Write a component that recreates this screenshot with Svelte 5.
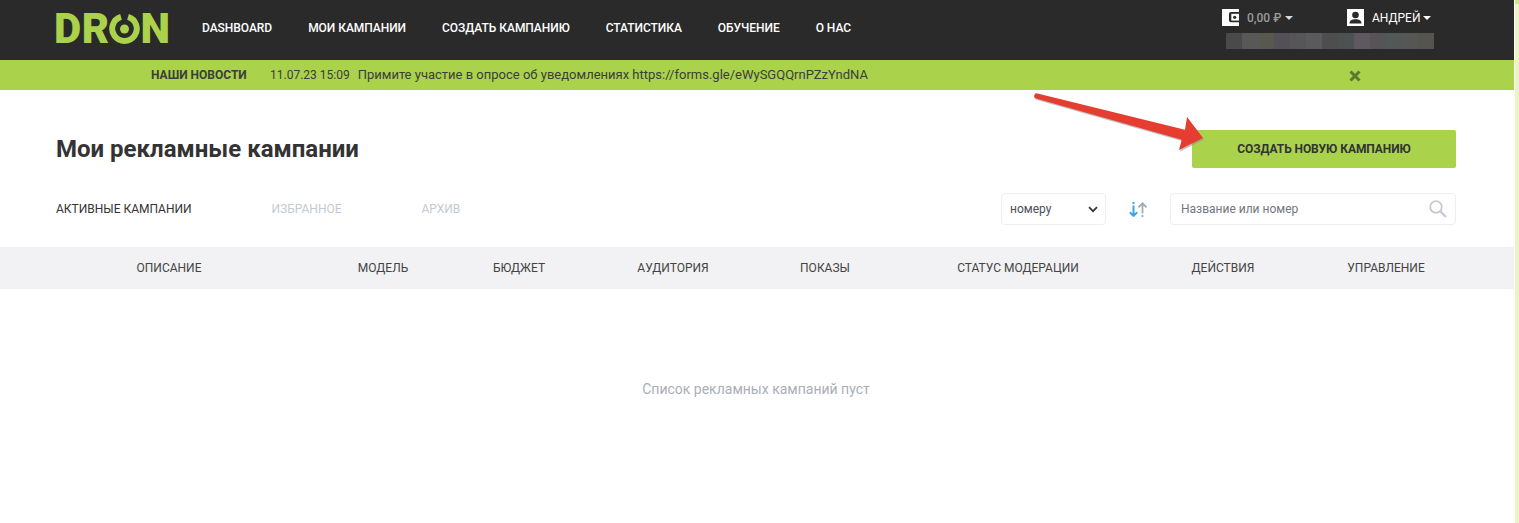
<script>
  const navItems = ['DASHBOARD', 'МОИ КАМПАНИИ', 'СОЗДАТЬ КАМПАНИЮ', 'СТАТИСТИКА', 'ОБУЧЕНИЕ', 'О НАС'];
  const blur = ['#4a4a4a','#585858','#58584f','#535058','#565658','#5a5a5c','#4e4e4e','#4c5252','#5e5860','#565456','#525856','#565654','#56544e'];
  const cols = [['ОПИСАНИЕ',258],['МОДЕЛЬ',170],['БЮДЖЕТ',102],['АУДИТОРИЯ',206],['ПОКАЗЫ',98],['СТАТУС МОДЕРАЦИИ',288],['ДЕЙСТВИЯ',122],['УПРАВЛЕНИЕ',204]];
</script>

<div class="page">
  <main class="main">
    <header class="top">
      <div class="logo" aria-label="DRON">
        <span>DR</span>
        <svg class="ring" width="31" height="32" viewBox="0 0 31 32">
          <path d="M12 3.900A12.300 12.300 0 1 0 19 3.900" fill="none" stroke="#aad24b" stroke-width="6"/>
          <circle cx="15.500" cy="16" r="4.500" fill="#aad24b"/>
        </svg>
        <span>N</span>
      </div>
      <nav class="nav">
        {#each navItems as item}<span>{item}</span>{/each}
      </nav>
      <div class="account">
        <div class="account-row">
          <div class="wallet">
            <svg width="17" height="17" viewBox="0 0 17 17">
              <rect width="17" height="17" fill="#fff"/>
              <path d="M17 3H9a2 2 0 0 0-2 2v6.300a2 2 0 0 0 2 2h8z" fill="#2a2a2a"/>
              <rect x="9.300" y="4.800" width="7.700" height="6.800" fill="#fff"/>
              <circle cx="12.700" cy="8.300" r="1.600" fill="#2a2a2a"/>
            </svg>
            <span class="balance">0,00 ₽</span><i class="caret"></i>
          </div>
          <div class="user">
            <svg width="17" height="17" viewBox="0 0 17 17">
              <rect width="17" height="17" fill="#fff"/>
              <circle cx="8.500" cy="6" r="3.300" fill="#2a2a2a"/>
              <path d="M2.500 14.500c0-3 2.500-4.300 6-4.300s6 1.300 6 4.300z" fill="#2a2a2a"/>
            </svg>
            <span class="uname">АНДРЕЙ</span><i class="caret light"></i>
          </div>
        </div>
        <div class="blur">
          {#each blur as c}<span style="background:{c}"></span>{/each}
        </div>
      </div>
    </header>

    <div class="news">
      <b>НАШИ НОВОСТИ</b>
      <span class="date">11.07.23 15:09</span>
      <span class="msg">Примите участие в опросе об уведомлениях https://forms.gle/eWySGQQrnPZzYndNA</span>
      <svg class="close" width="12" height="12" viewBox="0 0 12 12"><path d="M1.500 1.500l9 9M10.500 1.500l-9 9" stroke="#5f7631" stroke-width="3"/></svg>
    </div>

    <section class="title-row">
      <h1>Мои рекламные кампании</h1>
      <button class="create">СОЗДАТЬ НОВУЮ КАМПАНИЮ</button>
    </section>

    <section class="filters">
      <div class="tabs">
        <span class="tab active">АКТИВНЫЕ КАМПАНИИ</span>
        <span class="tab t2">ИЗБРАННОЕ</span>
        <span class="tab t3">АРХИВ</span>
      </div>
      <div class="select-wrap">
        <select><option>номеру</option></select>
        <svg class="chev" width="10" height="7" viewBox="0 0 10 7"><path d="M1 1.200l4 4 4-4" fill="none" stroke="#333" stroke-width="1.700"/></svg>
      </div>
      <svg class="sort" width="18" height="15" viewBox="0 0 18 15">
        <path d="M4.500 0v2M4.500 3.500V14M.8 10.200l3.700 3.700 3.700-3.700" fill="none" stroke="#3aa6e8" stroke-width="2"/>
        <path d="M13.500 15v-2M13.500 11.500V1.500M9.400 5.400l4.100-4.100 4.100 4.100" fill="none" stroke="#a3aab5" stroke-width="1.800"/>
      </svg>
      <div class="search">
        <input placeholder="Название или номер" />
        <svg class="loupe" width="18" height="18" viewBox="0 0 18 18"><circle cx="7" cy="7" r="5.800" fill="none" stroke="#c3c9d3" stroke-width="1.800"/><path d="M11.200 11.200L17 17" stroke="#c3c9d3" stroke-width="2.200"/></svg>
      </div>
    </section>

    <div class="thead">
      {#each cols as [label, w]}<span style="width:{w}px">{label}</span>{/each}
    </div>

    <p class="empty">Список рекламных кампаний пуст</p>

    <svg class="arrow" width="190" height="70" viewBox="0 0 190 70">
      <path d="M4 8.500L149.700 49.700 147 60 171 48 155 27 153 39.700 5.500 3.500a2.600 2.600 0 0 0-1.500 5z" transform="translate(1 1.500)" fill="#8c8c8c" opacity=".55"/>
      <path d="M4 8.500L149.700 49.700 147 60 171 48 155 27 153 39.700 5.500 3.500a2.600 2.600 0 0 0-1.500 5z" fill="#e53e30"/>
    </svg>
  </main>
  <aside class="scrollbar"><div class="thumb"></div></aside>
</div>

<style>
  :global(body) { margin: 0; background: #fff; overflow: hidden; }
  .page { display: flex; height: 523px; font-family: Roboto, "Liberation Sans", sans-serif; color: #333; font-size: 12px; }
  .main { flex: 1; position: relative; min-width: 0; }
  .scrollbar { width: 4px; margin-left: 1px; background: #eaf4c6; }
  .thumb { height: 4px; background: #cfe58a; }

  .top { height: 60px; background: #2a2a2a; display: flex; padding-left: 54px; box-sizing: border-box; position: relative; }
  .logo { width: 115px; height: 32px; margin-top: 13px; display: flex; align-items: center; color: #aad24b; font: 900 42px/32px Roboto, sans-serif; letter-spacing: 0.5px; }
  .ring { margin: 0 1px 0 -1px; flex: none; }
  .nav { display: flex; gap: 36px; margin-left: 33px; height: 56px; align-items: center; color: #fff; font-weight: 500; letter-spacing: -0.04px; }
  .account { margin-left: auto; margin-right: 80px; width: 208px; padding-top: 9px; }
  .account-row { display: flex; height: 17px; margin-left: -4px; }
  .wallet { display: flex; align-items: center; width: 125px; }
  .user { display: flex; align-items: center; }
  .balance { margin-left: 8px; color: #9a9a9a; font-weight: 500; }
  .uname { margin-left: 8px; color: #fff; }
  .caret { width: 0; height: 0; margin-left: 4px; border: 4px solid transparent; border-top: 4px solid #d8d8d8; border-bottom: 0; }
  .caret.light { margin-left: 2px; border-top-color: #fff; }
  .blur { display: flex; height: 16px; margin-top: 7px; }
  .blur span { flex: 1; }

  .news { height: 30px; background: #aad24b; display: flex; align-items: center; padding-left: 151px; color: #3d3d3d; position: relative; }
  .news b { font-weight: 700; width: 119px; }
  .msg { margin: 0 0 2px 8px; font-size: 13px; }
  .close { position: absolute; left: 1349px; top: 10px; }

  .title-row { display: flex; align-items: center; justify-content: space-between; padding: 40px 58px 0 56px; height: 38px; }
  h1 { margin: 0; font-size: 24px; line-height: 38px; font-weight: 700; color: #333; }
  .create { width: 264px; height: 38px; background: #aad24b; border: 0; border-radius: 2px; color: #333; font: 700 12px Roboto, sans-serif; letter-spacing: -0.08px; padding: 0; }

  .filters { display: flex; align-items: center; margin-top: 25px; padding: 0 58px 0 56px; height: 32px; }
  .tabs { flex: 1; display: flex; align-items: center; }
  .tab { color: #333; }
  .t2, .t3 { color: #c3c9d3; }
  .active { width: 215.500px; }
  .t2 { width: 150px; }
  .select-wrap { position: relative; width: 105px; height: 32px; }
  select { appearance: none; width: 100%; height: 100%; box-sizing: border-box; border: 1px solid #eceef1; border-radius: 4px; background: #fff; padding: 0 0 0 8px; font: 12px Roboto, sans-serif; color: #4a4f5a; }
  .chev { position: absolute; right: 8px; top: 13px; pointer-events: none; }
  .sort { margin: 0 23px; flex: none; }
  .search { position: relative; width: 286px; height: 32px; }
  input { width: 100%; height: 100%; box-sizing: border-box; border: 1px solid #eceef1; border-radius: 4px; padding: 0 40px 0 10px; font: 12px Roboto, sans-serif; color: #333; outline: none; }
  input::placeholder { color: #71767f; opacity: 1; }
  .loupe { position: absolute; right: 9px; top: 7px; }

  .thead { margin-top: 22px; height: 42px; background: #f2f2f4; display: flex; align-items: center; padding-left: 40px; }
  .thead span { text-align: center; flex: none; color: #444; }

  .empty { margin: 92px 0 0; width: 1512px; text-align: center; font-size: 14px; line-height: 16px; color: #a9aeb8; }

  .arrow { position: absolute; left: 1032px; top: 90px; pointer-events: none; }
</style>
